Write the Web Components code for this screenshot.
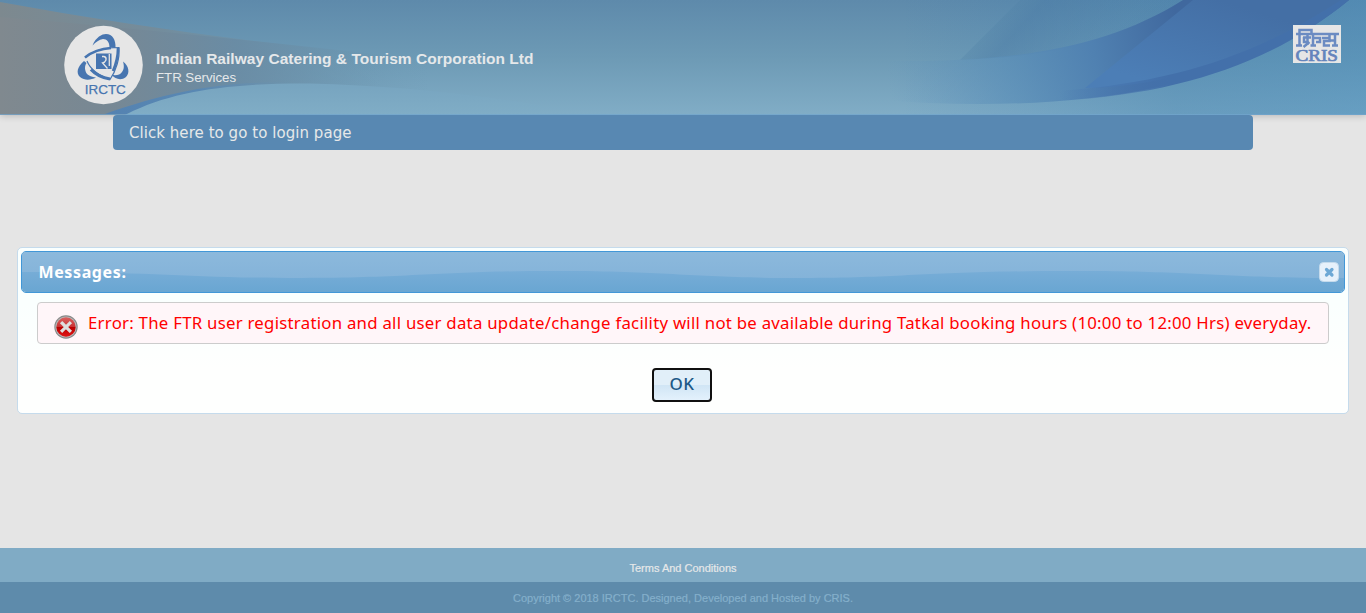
<!DOCTYPE html>
<html lang="en"><head><meta charset="utf-8"><title>FTR Services</title>
<style>
html,body{margin:0;height:100%}
body{background:#e5e5e5;font-family:"Liberation Sans",Arial,sans-serif;overflow:hidden}
</style></head><body>
<ftr-app></ftr-app>
<script>
const define=(name,html,init)=>customElements.define(name,class extends HTMLElement{
  constructor(){super();const t=document.createElement('template');t.innerHTML=html;
    this.attachShadow({mode:'open'}).append(t.content.cloneNode(true));}
  connectedCallback(){if(init)init(this);}
});

/* A single line of text, tracked out to the width it is given. */
define('fit-text','<style>:host{display:inline-block;white-space:nowrap}</style><slot></slot>',el=>{
  const target=parseFloat(el.getAttribute('width'));
  const n=el.textContent.length;
  el.style.letterSpacing='0px';
  const now=el.getBoundingClientRect().width;
  el.style.letterSpacing=((target-now)/n)+'px';
});

define('irctc-logo',`<style>:host{display:block;width:80px;height:80px;flex:none}svg{display:block}</style>
<svg width="80" height="80" viewBox="0 0 80 80">
<circle cx="39.500" cy="40" r="39.300" fill="#e6e6e6"/>
<g fill="#4775b0">
<path d="M28.500 20.500C32 12 38 9 42 9C48.500 9 52 15 51.500 23L45.500 22.500C45.500 17 43 14 39 14C35 14.500 32 17 28.500 20.500Z"/>
<path d="M20 36C13 42 12 48 16 52C21 56 27 55 32 52.500C27 52 22.500 50 21.500 46C20.500 43 21 40 22.500 38Z"/>
<path d="M59 36.500C65 41 66 48 62 52C57 56 51 54 48 50C53 50.500 56 50 58 47C60.500 44 60 40 59 36.500Z"/>
</g>
<g fill="none" stroke="#4775b0" stroke-linejoin="miter">
<path d="M21 32.500C30 24.500 42 22.500 55 22.500C56 33 52 46 46 54.500C36 51 27 46 23 36" stroke-width="1.200"/>
<path d="M21 32.500C29 26 38 23.500 47 23" stroke-width="2.600"/>
<path d="M54 23C54 31 52 39 49 46" stroke-width="2.600"/>
<path d="M27 44.500C32 50 39 53 46 54" stroke-width="3.200"/></g>
<rect x="32" y="28.500" width="15.500" height="15.500" fill="#4775b0"/>
<path d="M38 31.500H40Q42.500 32 42 35Q41 37.500 38.500 38L43.500 43.500M45.300 29V41" fill="none" stroke="#e6e6e6" stroke-width="1.300"/>
<text x="41.300" y="69" text-anchor="middle" font-family="Liberation Sans" font-size="13.500" stroke="#4775b0" stroke-width=".25" fill="#4775b0" textLength="41" lengthAdjust="spacingAndGlyphs">IRCTC</text>
</svg>`);

define('cris-logo',`<style>:host{display:block;width:48px;height:38px;flex:none}svg{display:block;overflow:visible}</style>
<svg width="48" height="38" viewBox="0 0 48 38">
<rect width="48" height="38" fill="#e6e6e6"/>
<g fill="none" stroke="#6b8bc2" stroke-width="2.500">
<path d="M3 9H46M6.500 8V21M3 20.500H9M6.500 8V5H18.500V8M14.500 9V20M10 12.500H18M11 12V17H15M16.500 17L10.500 22M20 9V20.500M17.500 20.500H23M20 13H27V17H23M29 13H36.500V9M36.500 12.500V16H31V20.500H37M37 15.500H42M42 9V20.500M39 20.500H45"/></g>
<text x="2.500" y="36" font-family="Liberation Serif" font-size="16.500" stroke="#6484bc" stroke-width=".7" fill="#6484bc" textLength="42.500" lengthAdjust="spacingAndGlyphs">CRIS</text>
</svg>`);

define('site-header',`<style>
:host{display:grid;height:115px;flex:none;box-shadow:0 1px 7px #0003}
.art,.bar{grid-area:1/1}
.art{display:block;width:100%;height:115px}
.bar{display:flex;align-items:flex-start;padding:25px 25px 0 64px;z-index:1}
.name{display:flex;flex-direction:column;align-items:flex-start;margin:24px auto 0 12px;color:#e5e8ea}
.org{font-weight:bold;font-size:15.500px;line-height:19px}
.svc{font-size:13.300px;line-height:20px}
</style>
<svg class="art" viewBox="0 0 1366 115" preserveAspectRatio="none">
<defs>
<linearGradient id="sky" x2="0" y2="1"><stop stop-color="#5e8aab"/><stop offset=".5" stop-color="#6d9ab5"/><stop offset="1" stop-color="#81adc6"/></linearGradient>
<linearGradient id="east"><stop offset=".66" stop-color="#3d7db5" stop-opacity="0"/><stop offset=".86" stop-color="#3d7fb0" stop-opacity=".36"/><stop offset="1" stop-color="#438bbd" stop-opacity=".42"/></linearGradient>
<linearGradient id="grey" gradientUnits="userSpaceOnUse" x1="0" x2="430" y1="0" y2="0"><stop stop-color="#80898f"/><stop offset=".25" stop-color="#778894"/><stop offset=".55" stop-color="#698ba4" stop-opacity=".85"/><stop offset="1" stop-color="#6b97b2" stop-opacity="0"/></linearGradient>
<linearGradient id="veil" gradientUnits="userSpaceOnUse" x1="0" x2="380" y1="0" y2="0"><stop stop-color="#7d898f"/><stop offset=".4" stop-color="#748c9b"/><stop offset="1" stop-color="#6b96af" stop-opacity="0"/></linearGradient>
<linearGradient id="rim" gradientUnits="userSpaceOnUse" x1="105" x2="290" y1="0" y2="0"><stop stop-color="#5482b1"/><stop offset=".5" stop-color="#5988b3"/><stop offset="1" stop-color="#6694b6" stop-opacity="0"/></linearGradient>
<linearGradient id="hill" gradientUnits="userSpaceOnUse" x1="0" x2="0" y1="83" y2="115"><stop stop-color="#77a4bf"/><stop offset="1" stop-color="#80adc6"/></linearGradient>
<linearGradient id="band" gradientUnits="userSpaceOnUse" x1="885" x2="1175" y1="70" y2="10"><stop stop-color="#6597bd" stop-opacity="0"/><stop offset=".4" stop-color="#5a8eb8" stop-opacity=".65"/><stop offset=".7" stop-color="#4f80b1" stop-opacity=".95"/><stop offset="1" stop-color="#40689e"/></linearGradient>
<linearGradient id="facet" gradientUnits="userSpaceOnUse" x1="1220" x2="1190" y1="0" y2="95"><stop stop-color="#446fa5"/><stop offset="1" stop-color="#4c7eb6"/></linearGradient>
<linearGradient id="edge" gradientUnits="userSpaceOnUse" x1="1060" x2="1170" y1="0" y2="0"><stop stop-color="#4572ad" stop-opacity="0"/><stop offset="1" stop-color="#4370aa"/></linearGradient>
<linearGradient id="fold" gradientUnits="userSpaceOnUse" x1="985" x2="1060" y1="20" y2="90"><stop stop-color="#5586a8" stop-opacity=".25"/><stop offset=".3" stop-color="#4b7ba5" stop-opacity=".45"/><stop offset="1" stop-color="#4b7ba5" stop-opacity=".05"/></linearGradient>
</defs>
<rect width="1366" height="115" fill="url(#sky)"/><rect width="1366" height="115" fill="url(#east)"/>
<path d="M0 2Q190 37 400 57L430 115H0Z" fill="url(#veil)"/>
<path d="M0 17Q160 30 430 60L430 115H0Z" fill="url(#grey)"/>
<path d="M105 114C180 88 230 81 310 82L280 90Q190 96 127 114Z" fill="url(#rim)"/>
<path d="M127 114C172 91 230 83 310 83.500Q420 86 540 105V115H125Z" fill="url(#hill)"/>
<path d="M1020 0L960 60C1040 57 1110 46 1183 0Z" fill="url(#fold)"/>
<path d="M890 61C1020 62 1108 47 1183 0H1349C1260 72 1140 104 980 104Q930 104 880 100Z" fill="url(#band)"/>
<path d="M1193 0L1085 88C1180 86 1275 50 1349 0Z" fill="url(#facet)"/>
<path d="M1060 91C1180 82 1260 53 1341 0H1349C1275 61 1185 93 1060 101Z" fill="url(#edge)"/>
<rect y="114" width="1366" height="1" fill="#72a5cd" opacity=".7"/>
</svg>
<div class="bar"><irctc-logo></irctc-logo>
<div class="name"><fit-text class="org" width="377.500">Indian Railway Catering &amp; Tourism Corporation Ltd</fit-text><fit-text class="svc" width="80">FTR Services</fit-text></div>
<cris-logo></cris-logo></div>`);

define('login-bar',`<style>:host{display:block;box-sizing:border-box;width:1140px;height:35px;margin-left:113px;padding-left:16px;background:#5888b2;border-radius:4px;color:#e6e8e9;font:15px/36px "DejaVu Sans",Verdana,sans-serif;position:relative;flex:none}</style><fit-text width="222.500">Click here to go to login page</fit-text>`);

define('close-button',`<style>:host{display:block;width:20px;height:20px}svg{display:block}</style>
<svg width="20" height="20"><rect x=".5" y=".5" width="19" height="19" rx="4" fill="#e6f1fb" stroke="#c5dbec"/><path d="M7.500 7.500L13 13M13 7.500L7.500 13" stroke="#6da8d5" stroke-width="3.200" stroke-linecap="round"/></svg>`);

define('error-icon',`<style>:host{display:block;width:24px;height:24px;flex:none}svg{display:block}</style>
<svg width="24" height="24"><defs><linearGradient id="r" x2="0" y2="1"><stop stop-color="#d9605f"/><stop offset=".48" stop-color="#c93435"/><stop offset=".5" stop-color="#b80000"/><stop offset="1" stop-color="#e11313"/></linearGradient></defs>
<circle cx="12" cy="12" r="11.700" fill="#888"/><circle cx="12" cy="12" r="10.600" fill="#b9b9b9"/><circle cx="12" cy="12" r="9.700" fill="url(#r)"/><path d="M8.200 8.200L15.800 15.800M15.800 8.200L8.200 15.800" stroke="#dedede" stroke-width="3.200" stroke-linecap="square"/></svg>`);

define('message-dialog',`<style>
:host{display:flex;flex-direction:column;box-sizing:border-box;width:1332px;height:167px;margin:97px 0 0 17px;padding:3px;border:1px solid #c5dbec;border-radius:5px;background:linear-gradient(#fafffe 35%,#fefffe 120px);font-family:"Noto Sans","Lucida Sans",sans-serif;flex:none}
.title{display:grid;height:40px;border:1px solid #4297d7;border-radius:5px;overflow:hidden;flex:none}
.title svg,.row{grid-area:1/1}.title svg{display:block;width:100%;height:40px}
.row{display:flex;align-items:center;justify-content:space-between;padding:0 5px 0 16.500px;color:#fff;font-weight:bold;font-size:16px;z-index:1}
.msg{display:flex;box-sizing:border-box;margin:9px 16px 0;height:42px;border:1px solid #ccc;border-radius:4px;background:#fff6f9;color:#f00;font-size:16.800px;line-height:40px;padding-left:16px;flex:none}
error-icon{margin:11.500px 10px 0 0}
button{box-sizing:border-box;width:60px;height:34px;margin:24px auto 0;transform:translateX(-1px);padding:0;border:2px solid #101010;border-radius:4px;background:linear-gradient(#e1eff9 0 50%,#d0e5f5 50%,#e3f1fc);color:#1d5987;font:500 17px/26px "Noto Sans","Lucida Sans",sans-serif}
button fit-text{position:relative;top:-1px}
</style>
<div class="title"><svg viewBox="0 0 1322 40" preserveAspectRatio="none"><defs><linearGradient id="hi" x2="0" y2="1"><stop stop-color="#8cb9dc"/><stop offset="1" stop-color="#84b3d9"/></linearGradient><linearGradient id="lo" x2="0" y2="1"><stop offset=".45" stop-color="#78add7"/><stop offset="1" stop-color="#69a6d2"/></linearGradient></defs><rect width="1322" height="40" fill="url(#lo)"/><path d="M0 0H1322V26C1200 26 1180 19 1050 19C900 19 890 26 780 26C670 26 650 19 530 19C420 19 390 26 280 26C170 26 120 19 0 20Z" fill="url(#hi)"/></svg>
<div class="row"><fit-text width="88">Messages:</fit-text><close-button></close-button></div></div>
<div class="msg"><error-icon></error-icon><fit-text width="1223.500">Error: The FTR user registration and all user data update/change facility will not be available during Tatkal booking hours (10:00 to 12:00 Hrs) everyday.</fit-text></div>
<button><fit-text width="25">OK</fit-text></button>`);

define('site-footer',`<style>:host{display:flex;flex-direction:column;margin-top:auto;text-align:center;flex:none}
.a{height:34px;background:#80abc5;color:#e6e8e9;font-size:11px;line-height:40px;-webkit-text-stroke:.2px}
.b{height:31px;background:#5e8bab;color:#85b0cb;font-size:11px;line-height:32px;-webkit-text-stroke:.2px}</style>
<div class="a"><fit-text width="107">Terms And Conditions</fit-text></div><div class="b"><fit-text width="340">Copyright © 2018 IRCTC. Designed, Developed and Hosted by CRIS.</fit-text></div>`);

define('ftr-app',`<style>:host{display:flex;flex-direction:column;height:100vh}</style>
<site-header></site-header><login-bar></login-bar><message-dialog></message-dialog><site-footer></site-footer>`);
</script></body></html>
